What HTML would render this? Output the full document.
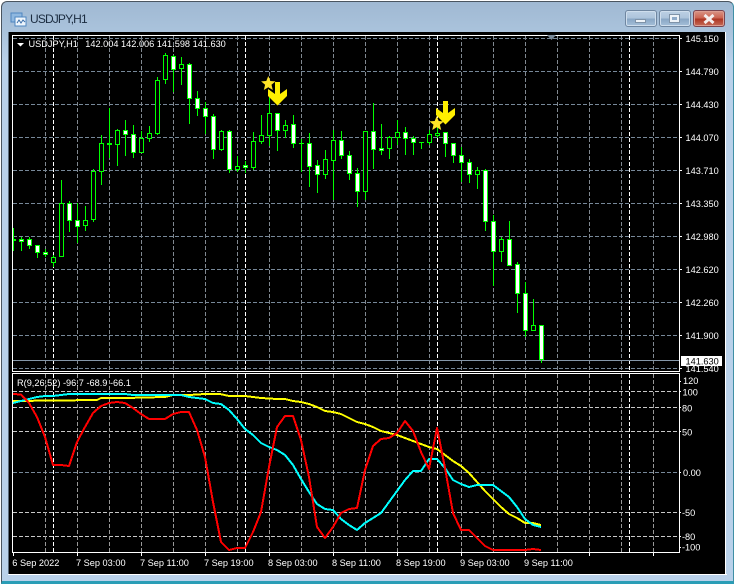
<!DOCTYPE html>
<html><head><meta charset="utf-8"><style>
html,body{margin:0;padding:0;background:#fff}
body{width:737px;height:584px;position:relative;overflow:hidden;font-family:"Liberation Sans",sans-serif}
.win{position:absolute;left:1px;top:1px;width:733px;height:583px;box-sizing:border-box;border:1px solid #4a5560;border-bottom:3px solid #2a9db6;border-right-color:#3f8fa5;border-radius:6px 6px 0 0;background:linear-gradient(180deg,#a0b9d3 0,#aac3dc 30px,#b9d1ea 60px,#b9d1ea 100%)}
.t{position:absolute;left:30px;top:12px;font-size:12px;line-height:15px;color:#1b2c40;letter-spacing:-.85px}
.b{position:absolute;top:10px;height:17px;box-sizing:border-box;border:1px solid #6f86a0;border-radius:3px;box-shadow:inset 0 0 0 1px #cfdeed;background:linear-gradient(180deg,#bcd0e4 0,#aec5dc 45%,#8aa7c5 55%,#a5c0da 100%)}
.c{border-color:#7a4550;box-shadow:inset 0 0 0 1px #dc9c90;background:linear-gradient(180deg,#d99486 0,#cb6553 45%,#ad3725 55%,#c66c58 100%)}
svg{position:absolute;left:0;top:0}
text{font-family:"Liberation Sans",sans-serif;font-size:9.2px;fill:#fff}
</style></head><body>
<div class="win"></div>
<svg width="737" height="30" style="z-index:1"><g shape-rendering="crispEdges"><rect x="11" y="13" width="11" height="9" fill="#8fb8e0" stroke="#4f86c0"/><rect x="15" y="17" width="11" height="9" fill="#eef5fc" stroke="#4f86c0"/></g><path d="M17 23l2-3 2 3 2-3 2 2" fill="none" stroke="#3b6ea8"/></svg>
<div class="t" style="z-index:1">USDJPY,H1</div>
<div class="b" style="left:625px;width:32px;z-index:1"><div style="position:absolute;left:9px;top:8px;width:11px;height:4px;background:#eef3f8;border:1px solid #7f93a8;box-sizing:border-box"></div></div>
<div class="b" style="left:659px;width:32px;z-index:1"><div style="position:absolute;left:9px;top:3px;width:11px;height:9px;box-sizing:border-box;background:#eef3f8;border:1px solid #7f93a8;"><div style="position:absolute;left:2px;top:2px;width:5px;height:3px;background:#8fabc9"></div></div></div>
<div class="b c" style="left:693px;width:32px;z-index:1"><svg width="30" height="15"><path d="M10.500 4l9 8M19.500 4l-9 8" stroke="#f4eeee" stroke-width="3"/></svg></div>
<svg width="737" height="584" viewBox="0 0 737 584" style="z-index:2">
<defs><clipPath id="s"><rect x="13" y="374" width="666" height="178"/></clipPath></defs>
<rect x="8" y="32" width="717.500" height="542" fill="#000"/>
<g shape-rendering="crispEdges">
<path d="M8 574.500H727M725.500 32V575" stroke="#fff" fill="none"/>
<path d="M8.500 32V574" stroke="#5a6b7c" fill="none"/>
<path d="M13 38.500H679M13 71.500H679M13 104.500H679M13 137.500H679M13 170.500H679M13 203.500H679M13 236.500H679M13 269.500H679M13 302.500H679M13 335.500H679M13 368.500H679" stroke="#778899" stroke-dasharray="4 2"/>
<path d="M45.500 36V371M77.500 36V371M109.500 36V371M141.500 36V371M173.500 36V371M205.500 36V371M237.500 36V371M269.500 36V371M301.500 36V371M333.500 36V371M365.500 36V371M397.500 36V371M429.500 36V371M461.500 36V371M493.500 36V371M525.500 36V371M557.500 36V371M589.500 36V371M621.500 36V371M653.500 36V371" stroke="#808890" stroke-dasharray="4 2"/>
<path d="M13 391.500H679M13 407.500H679M13 431.500H679M13 512.500H679M13 536.500H679" stroke="#c8c8c8" stroke-dasharray="4 2"/>
<path d="M13 472.500H679" stroke="#778899" stroke-dasharray="4 2"/>
<path d="M45.500 374V552M77.500 374V552M109.500 374V552M141.500 374V552M173.500 374V552M205.500 374V552M237.500 374V552M269.500 374V552M301.500 374V552M333.500 374V552M365.500 374V552M397.500 374V552M429.500 374V552M461.500 374V552M493.500 374V552M525.500 374V552M557.500 374V552M589.500 374V552M621.500 374V552M653.500 374V552" stroke="#989898" stroke-dasharray="4 2"/>
<path d="M53.500 36V371M245.500 36V371M437.500 36V371M629.500 36V371M53.500 374V552M245.500 374V552M437.500 374V552M629.500 374V552" stroke="#fff" stroke-dasharray="4 2"/>
<path d="M13 360.500H679" stroke="#8496a8"/>
</g>
<path style="stroke:#00ff00;stroke-width:1;fill:none" d="M13.500 228V251M21.500 237V251M29.500 237V249M37.500 245V258M45.500 249V257M53.500 255V267M61.500 180V257M69.500 201V232M77.500 203V243M85.500 206V231M93.500 169V222M101.500 135V185M109.500 108V158M117.500 129V166M125.500 120V156M133.500 125V158M141.500 131V153M149.500 126V142M157.500 77V135M165.500 53V84M173.500 55V92M181.500 57V85M189.500 63V124M197.500 91V116M205.500 102V134M213.500 114V159M221.500 130V151M229.500 130V173M237.500 156V172M245.500 161V173M253.500 132V170M261.500 115V144M269.500 97V146M277.500 113V151M285.500 120V138M293.500 115V148M301.500 139V172M299 143.500H304M309.500 133V187M317.500 160V193M325.500 150V179M333.500 130V200M341.500 131V159M349.500 151V180M357.500 168V207M365.500 131V200M373.500 103V169M381.500 124V155M389.500 136V159M397.500 120V145M405.500 127V155M413.500 136V155M421.500 142V149M419 142.500H424M429.500 130V145M437.500 125V138M445.500 132V157M453.500 143V163M461.500 147V182M469.500 159V183M477.500 167V189M485.500 169V231M493.500 215V286M501.500 237V262M509.500 221V266M517.500 262V313M525.500 282V337M533.500 299V331M541.500 325V363"/>
<path style="stroke:#00ff00;stroke-width:1;fill:#fff" d="M13.500 239.500h2V240.500h-2zM19.500 239.500h4V241.500h-4zM27.500 239.500h4V245.500h-4zM35.500 245.500h4V252.500h-4zM43.500 252.500h4V254.500h-4zM67.500 203.500h4V220.500h-4zM75.500 220.500h4V226.500h-4zM107.500 143.500h4V144.500h-4zM123.500 130.500h4V134.500h-4zM131.500 134.500h4V152.500h-4zM171.500 56.500h4V69.500h-4zM187.500 64.500h4V98.500h-4zM195.500 98.500h4V108.500h-4zM203.500 108.500h4V116.500h-4zM211.500 116.500h4V149.500h-4zM227.500 131.500h4V169.500h-4zM243.500 165.500h4V167.500h-4zM275.500 113.500h4V130.500h-4zM291.500 124.500h4V143.500h-4zM307.500 143.500h4V166.500h-4zM315.500 165.500h4V174.500h-4zM339.500 140.500h4V155.500h-4zM347.500 155.500h4V173.500h-4zM355.500 173.500h4V191.500h-4zM371.500 131.500h4V149.500h-4zM379.500 148.500h4V150.500h-4zM403.500 132.500h4V138.500h-4zM411.500 138.500h4V142.500h-4zM443.500 132.500h4V143.500h-4zM451.500 143.500h4V155.500h-4zM459.500 155.500h4V162.500h-4zM467.500 162.500h4V174.500h-4zM483.500 170.500h4V221.500h-4zM491.500 221.500h4V251.500h-4zM507.500 239.500h4V265.500h-4zM515.500 264.500h4V293.500h-4zM523.500 293.500h4V330.500h-4zM539.500 325.500h4V359.500h-4z"/>
<path style="stroke:#00ff00;stroke-width:1;fill:#000" d="M51.500 257.500h4V262.500h-4zM59.500 203.500h4V256.500h-4zM83.500 220.500h4V225.500h-4zM91.500 171.500h4V219.500h-4zM99.500 143.500h4V171.500h-4zM115.500 130.500h4V144.500h-4zM139.500 138.500h4V152.500h-4zM147.500 133.500h4V138.500h-4zM155.500 80.500h4V133.500h-4zM163.500 55.500h4V79.500h-4zM179.500 64.500h4V68.500h-4zM219.500 131.500h4V149.500h-4zM235.500 166.500h4V169.500h-4zM251.500 141.500h4V167.500h-4zM259.500 135.500h4V141.500h-4zM267.500 113.500h4V135.500h-4zM283.500 125.500h4V130.500h-4zM323.500 159.500h4V174.500h-4zM331.500 140.500h4V160.500h-4zM363.500 131.500h4V191.500h-4zM387.500 137.500h4V148.500h-4zM395.500 132.500h4V137.500h-4zM427.500 134.500h4V142.500h-4zM435.500 133.500h4V135.500h-4zM475.500 170.500h4V174.500h-4zM499.500 239.500h4V251.500h-4zM531.500 325.500h4V330.500h-4z"/>
<g shape-rendering="crispEdges">
<path d="M12.500 35.500H679.500V371.500H12.500zM12.500 373.500H679.500V552.500H12.500z" stroke="#fff" fill="none"/>
<path d="M679 38.500h3M679 71.500h3M679 104.500h3M679 137.500h3M679 170.500h3M679 203.500h3M679 236.500h3M679 269.500h3M679 302.500h3M679 335.500h3M679 368.500h3M679 381.500h2M679 391.500h2M679 407.500h2M679 431.500h2M679 472.500h2M679 512.500h2M679 536.500h2M679 547.500h2M13.500 553v3M77.500 553v3M141.500 553v3M205.500 553v3M269.500 553v3M333.500 553v3M397.500 553v3M461.500 553v3M525.500 553v3M589.500 553v3M653.500 553v3" stroke="#fff"/>
</g>
<path fill="#ffef00" d="M275 82h5v12l7-5v7l-9.500 9.500-9.500-9.500v-7l7 5z"/>
<path fill="#ffef00" d="M443 101h5v12l7-5v7l-9.500 9.500-9.500-9.500v-7l7 5z"/>
<path fill="#ffe428" d="M268.300 76l2 5 5.200.4-4 3.400 1.300 5.200-4.500-2.800-4.500 2.800 1.300-5.200-4-3.400 5.200-.4z"/>
<path fill="#ffe428" d="M436.700 116l2 5 5.200.4-4 3.400 1.300 5.200-4.500-2.800-4.500 2.800 1.300-5.200-4-3.400 5.200-.4z"/>
<g clip-path="url(#s)" fill="none" stroke-width="2" stroke-linejoin="round" shape-rendering="crispEdges">
<polyline stroke="#ffff00" points="13,401 97,400 101,398 125,398 165,397 173,395 189,395 205,394 220,394 229,396 245,396 253,397 261,398 277,399 285,399 293,401 301,402 309,404 317,407 325,411 333,412 341,414 349,418 357,422 365,424 373,427 381,431 389,433 397,435 405,438 413,441 421,444 429,447 437,449 445,455 453,461 461,466 469,473 477,482 485,491 493,499 501,507 509,514 517,518 525,523 533,523 541,525"/>
<polyline stroke="#00ffff" points="13,403 21,401 29,399 37,397 45,396 53,396 61,395 69,394 125,394 133,395 173,395 181,395 189,397 197,398 205,399 213,403 221,404 229,410 237,419 245,429 253,435 261,443 269,447 277,450 285,455 293,465 301,479 309,492 317,504 325,509 333,510 341,519 349,525 357,530 365,523 373,518 381,513 389,502 397,491 405,480 413,471 421,471 429,459 437,459 445,468 453,480 461,484 469,487 477,485 485,485 493,485 501,491 509,497 517,507 525,519 533,525 541,527"/>
<polyline stroke="#ff0000" points="13,394 21,394.500 29,403 37,417 45,437 53,465 61,465 69,466 77,442 85,427 93,413 101,406 109,403 117,402 125,403 133,408 141,414 149,419 157,419 165,419 173,414 181,412 189,412 197,430 205,457 213,502 221,542 229,550 237,548 245,548 253,532 261,512 269,467 277,427 285,416 293,416 301,440 309,477 317,527 325,538 333,527 341,513 349,509 357,508 365,470 373,446 381,439 389,438 397,433 405,421 413,431 421,452 429,469 437,428 445,468 453,513 461,530 469,530 477,538 485,546 493,550 501,550 509,550 517,550 525,550 533,549 541,550"/>
</g>
<path d="M547 35h9l-4.500 5z" fill="#7a8a9a"/>
<path d="M17 43h7l-3.500 3.500z" fill="#fff"/>
<text x="28.500" y="47">USDJPY,H1</text>
<text x="85.300" y="47">142.004 142.006 141.598 141.630</text>
<text x="17" y="386">R(9,26,52) -96.7 -68.9 -66.1</text>
<text x="685.500" y="42">145.150</text>
<text x="685.500" y="75">144.790</text>
<text x="685.500" y="108">144.430</text>
<text x="685.500" y="141">144.070</text>
<text x="685.500" y="174">143.710</text>
<text x="685.500" y="207">143.350</text>
<text x="685.500" y="240">142.980</text>
<text x="685.500" y="273">142.620</text>
<text x="685.500" y="306">142.260</text>
<text x="685.500" y="339">141.900</text>
<text x="685.500" y="372">141.540</text>
<rect x="681" y="356" width="41" height="10" fill="#fff" shape-rendering="crispEdges"/>
<text x="685.500" y="364.500" style="fill:#000">141.630</text>
<text x="683" y="384">120</text>
<text x="682.500" y="395.500">100</text>
<text x="682" y="411.500">80</text>
<text x="682" y="435.500">50</text>
<text x="683" y="476">0.00</text>
<text x="682" y="516">-50</text>
<text x="682" y="540">-80</text>
<text x="682" y="550.500">-100</text>
<text x="12.300" y="566">6 Sep 2022</text>
<text x="76" y="566">7 Sep 03:00</text>
<text x="140" y="566">7 Sep 11:00</text>
<text x="204" y="566">7 Sep 19:00</text>
<text x="268" y="566">8 Sep 03:00</text>
<text x="332" y="566">8 Sep 11:00</text>
<text x="396" y="566">8 Sep 19:00</text>
<text x="460" y="566">9 Sep 03:00</text>
<text x="524" y="566">9 Sep 11:00</text>
</svg>
</body></html>
